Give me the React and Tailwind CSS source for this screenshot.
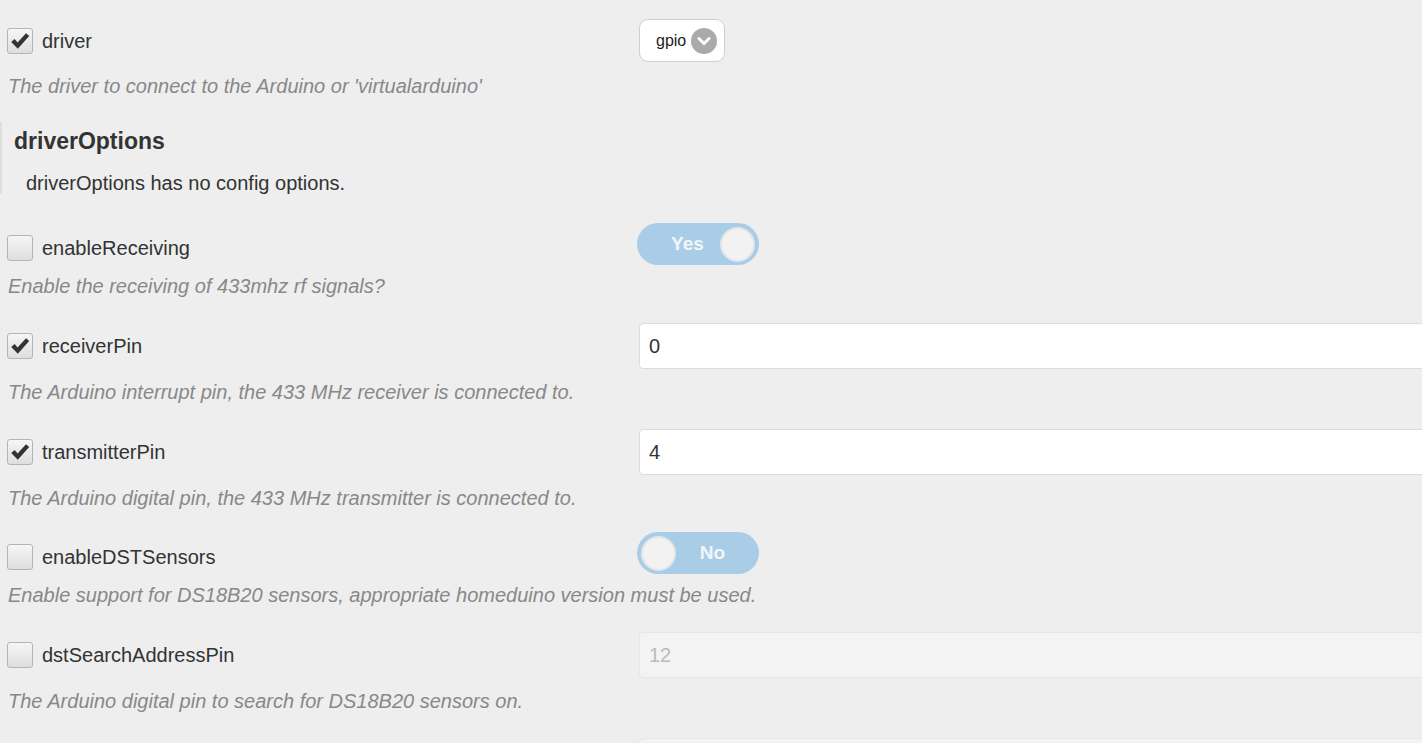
import React from "react";

function CheckBox({ checked }) {
  return (
    <div className="w-[26px] h-[26px] shrink-0 rounded-[3px] border border-[#b4b4b4] bg-gradient-to-b from-[#f6f6f6] to-[#dedede] flex items-center justify-center">
      {checked && (
        <svg width="20" height="18" viewBox="0 0 20 18">
          <path d="M1.2 10 L4.6 7 L7.6 10.6 L16 1.2 L19.2 4 L7.8 16.8 Z" fill="#333" />
        </svg>
      )}
    </div>
  );
}

function Label({ checked, text, toggle }) {
  return (
    <div className={`w-[632px] shrink-0 pl-[7px] flex items-center gap-[9px] ${toggle ? "pt-[8px]" : ""}`}>
      <CheckBox checked={checked} />
      <span className="text-[20px] text-[#333]">{text}</span>
    </div>
  );
}

function Desc({ children, className }) {
  return (
    <p className={`pl-[8px] text-[20px] leading-[24px] italic text-[#888] ${className}`}>{children}</p>
  );
}

function Toggle({ on }) {
  return (
    <div className="ml-[5px] w-[122px] h-[42px] shrink-0 rounded-full bg-[#a9cde6] flex items-center px-[4px]">
      {on ? (
        <>
          <span className="flex-1 pl-[14px] text-center text-[19px] font-bold text-[#f1f6fa]">Yes</span>
          <div className="w-[35px] h-[35px] rounded-full bg-[#f2f2f2] border-2 border-[#e3e6e8]" />
        </>
      ) : (
        <>
          <div className="w-[35px] h-[35px] rounded-full bg-[#f2f2f2] border-2 border-[#e3e6e8]" />
          <span className="flex-1 pr-[6px] text-center text-[19px] font-bold text-[#f1f6fa]">No</span>
        </>
      )}
    </div>
  );
}

function TextInput({ value, disabled }) {
  return (
    <div
      className={`ml-[7px] w-[820px] h-[46px] shrink-0 rounded-[4px] border flex items-center pl-[9px] text-[20px] ${
        disabled ? "bg-[#f3f3f3] border-[#e6e6e6] text-[#bbb]" : "bg-white border-[#dcdcdc] text-[#333]"
      }`}
    >
      {value}
    </div>
  );
}

export default function App() {
  return (
    <div className="w-screen h-screen overflow-hidden bg-[#eeeeee] font-['Liberation_Sans',Arial,sans-serif] pt-[19px]">
      {/* driver */}
      <div className="flex items-center h-[43px]">
        <Label checked text="driver" />
        <div className="ml-[7px] w-[86px] h-[43px] shrink-0 rounded-[9px] border border-[#cfcfcf] bg-white flex items-center pl-[16px] gap-[5px]">
          <span className="text-[16px] text-[#222]">gpio</span>
          <div className="w-[26px] h-[26px] rounded-full bg-[#aaaaaa] flex items-center justify-center">
            <svg width="14" height="10" viewBox="0 0 14 10">
              <path d="M2 2.5 L7 7.5 L12 2.5" fill="none" stroke="#fff" strokeWidth="3" strokeLinecap="round" strokeLinejoin="round" />
            </svg>
          </div>
        </div>
      </div>
      <Desc className="mt-[12px]">The driver to connect to the Arduino or 'virtualarduino'</Desc>

      {/* driverOptions */}
      <div className="mt-[24px] border-l-2 border-[#dedede] pl-[12px] pt-[4px]">
        <h3 className="text-[23px] leading-[30px] font-bold text-[#333]">driverOptions</h3>
        <p className="mt-[16px] pl-[12px] text-[20px] leading-[22px] text-[#333]">driverOptions has no config options.</p>
      </div>

      {/* enableReceiving */}
      <div className="mt-[29px] flex items-center h-[42px]">
        <Label text="enableReceiving" toggle />
        <Toggle on />
      </div>
      <Desc className="mt-[9px]">Enable the receiving of 433mhz rf signals?</Desc>

      {/* receiverPin */}
      <div className="mt-[25px] flex items-center h-[46px]">
        <Label checked text="receiverPin" />
        <TextInput value="0" />
      </div>
      <Desc className="mt-[11px]">The Arduino interrupt pin, the 433 MHz receiver is connected to.</Desc>

      {/* transmitterPin */}
      <div className="mt-[25px] flex items-center h-[46px]">
        <Label checked text="transmitterPin" />
        <TextInput value="4" />
      </div>
      <Desc className="mt-[11px]">The Arduino digital pin, the 433 MHz transmitter is connected to.</Desc>

      {/* enableDSTSensors */}
      <div className="mt-[22px] flex items-center h-[42px]">
        <Label text="enableDSTSensors" toggle />
        <Toggle />
      </div>
      <Desc className="mt-[9px]">Enable support for DS18B20 sensors, appropriate homeduino version must be used.</Desc>

      {/* dstSearchAddressPin */}
      <div className="mt-[25px] flex items-center h-[46px]">
        <Label text="dstSearchAddressPin" />
        <TextInput value="12" disabled />
      </div>
      <Desc className="mt-[11px]">The Arduino digital pin to search for DS18B20 sensors on.</Desc>

      {/* next field, only its input top is in view */}
      <div className="mt-[25px] flex items-center h-[46px]">
        <div className="w-[632px] shrink-0" />
        <TextInput value="" disabled />
      </div>
    </div>
  );
}
